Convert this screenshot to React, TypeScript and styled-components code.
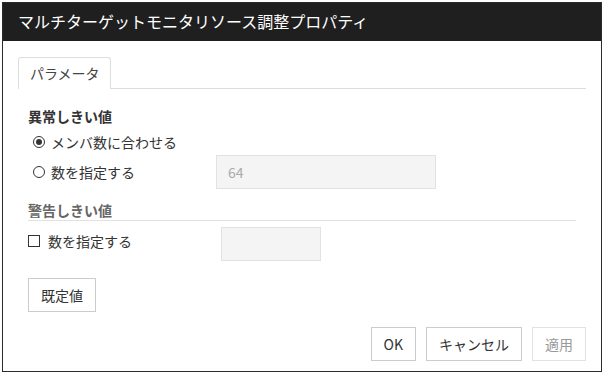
import React from "react";
import styled, { createGlobalStyle } from "styled-components";

// Styles
const GlobalStyle = createGlobalStyle`
  body {
    margin: 2px;
    background: #ffffff;
    font-family: "Noto Sans CJK JP", "Noto Sans", sans-serif;
    color: #333333;
  }
`;

const Dialog = styled.div`
  width: 600px;
  height: 370px;
  box-sizing: border-box;
  border: 1px solid #2b2b2b;
  display: flex;
  flex-direction: column;
  background: #ffffff;
`;

const TitleBar = styled.div`
  height: 38px;
  background: #1f1f1f;
  color: #ffffff;
  font-size: 16px;
  font-weight: 400;
  display: flex;
  align-items: center;
  padding-left: 15px;
  padding-bottom: 2px;
  box-sizing: border-box;
`;

const Body = styled.div`
  flex: 1;
  display: flex;
  flex-direction: column;
  padding: 16px 15px 10px 15px;
`;

const TabBar = styled.div`
  display: flex;
  height: 32px;
`;

const Tab = styled.div`
  border: 1px solid #dddddd;
  border-bottom: none;
  border-radius: 3px 3px 0 0;
  padding: 0 10px 0 11px;
  font-size: 14px;
  line-height: 30px;
  color: #444444;
`;

const TabFill = styled.div`
  flex: 1;
  border-bottom: 1px solid #dddddd;
`;

const Panel = styled.div`
  padding: 17px 10px 0 10px;
`;

const Heading = styled.div<{ $muted?: boolean; $ruled?: boolean }>`
  font-size: 14px;
  font-weight: bold;
  line-height: 20px;
  color: ${p => (p.$muted ? "#666666" : "#333333")};
  border-bottom: ${p => (p.$ruled ? "1px solid #e2e2e2" : "none")};
  margin-top: ${p => (p.$ruled ? "11px" : "0")};
`;

const Row = styled.div<{ $gap: number }>`
  display: flex;
  align-items: center;
  margin-top: ${p => p.$gap}px;
  font-size: 14px;
  line-height: 20px;
`;

const Label = styled.label<{ $width: number; $indent?: number }>`
  width: ${p => p.$width}px;
  padding-left: ${p => p.$indent || 0}px;
  box-sizing: border-box;
  display: flex;
  align-items: center;
  align-self: ${p => (p.$indent ? "center" : "flex-start")};
  margin-top: ${p => (p.$indent ? 0 : 4)}px;
`;

const Radio = styled.span<{ $checked?: boolean }>`
  width: 12px;
  height: 12px;
  box-sizing: border-box;
  border: 1.5px solid #333333;
  border-radius: 50%;
  margin-right: 6px;
  display: flex;
  align-items: center;
  justify-content: center;
  &::after {
    content: "";
    width: 6px;
    height: 6px;
    border-radius: 50%;
    background: ${p => (p.$checked ? "#333333" : "transparent")};
  }
`;

const Check = styled.span`
  width: 12px;
  height: 12px;
  box-sizing: border-box;
  border: 1.5px solid #333333;
  margin-right: 8px;
`;

const Input = styled.div<{ $width: number }>`
  width: ${p => p.$width}px;
  height: 34px;
  box-sizing: border-box;
  background: #f4f4f4;
  border: 1px solid #e2e2e2;
  padding-left: 11px;
  line-height: 32px;
  font-size: 14px;
  color: #aaaaaa;
`;

const Button = styled.button<{ $disabled?: boolean }>`
  height: 34px;
  padding: 0 12px;
  background: #ffffff;
  border: 1px solid ${p => (p.$disabled ? "#e2e2e2" : "#cccccc")};
  color: ${p => (p.$disabled ? "#999999" : "#333333")};
  font-family: "Noto Sans CJK JP", "Noto Sans", sans-serif;
  font-size: 14px;
  cursor: pointer;
`;

const DefaultRow = styled.div`
  margin-top: 17px;
`;

const Footer = styled.div`
  margin-top: auto;
  display: flex;
  justify-content: flex-end;
  gap: 10px;
`;

const App = () => {
  return (
    <>
      <GlobalStyle />
      <Dialog>
        <TitleBar>マルチターゲットモニタリソース調整プロパティ</TitleBar>
        <Body>
          <TabBar>
            <Tab>パラメータ</Tab>
            <TabFill />
          </TabBar>
          <Panel>
            <Heading>異常しきい値</Heading>
            <Row $gap={6}>
              <Label $width={188} $indent={5}>
                <Radio $checked />
                メンバ数に合わせる
              </Label>
            </Row>
            <Row $gap={3}>
              <Label $width={188} $indent={5}>
                <Radio />
                数を指定する
              </Label>
              <Input $width={220}>64</Input>
            </Row>
            <Heading $muted $ruled>警告しきい値</Heading>
            <Row $gap={6}>
              <Label $width={193}>
                <Check />
                数を指定する
              </Label>
              <Input $width={100} />
            </Row>
            <DefaultRow>
              <Button>既定値</Button>
            </DefaultRow>
          </Panel>
          <Footer>
            <Button>OK</Button>
            <Button>キャンセル</Button>
            <Button $disabled>適用</Button>
          </Footer>
        </Body>
      </Dialog>
    </>
  );
};

export default App;
